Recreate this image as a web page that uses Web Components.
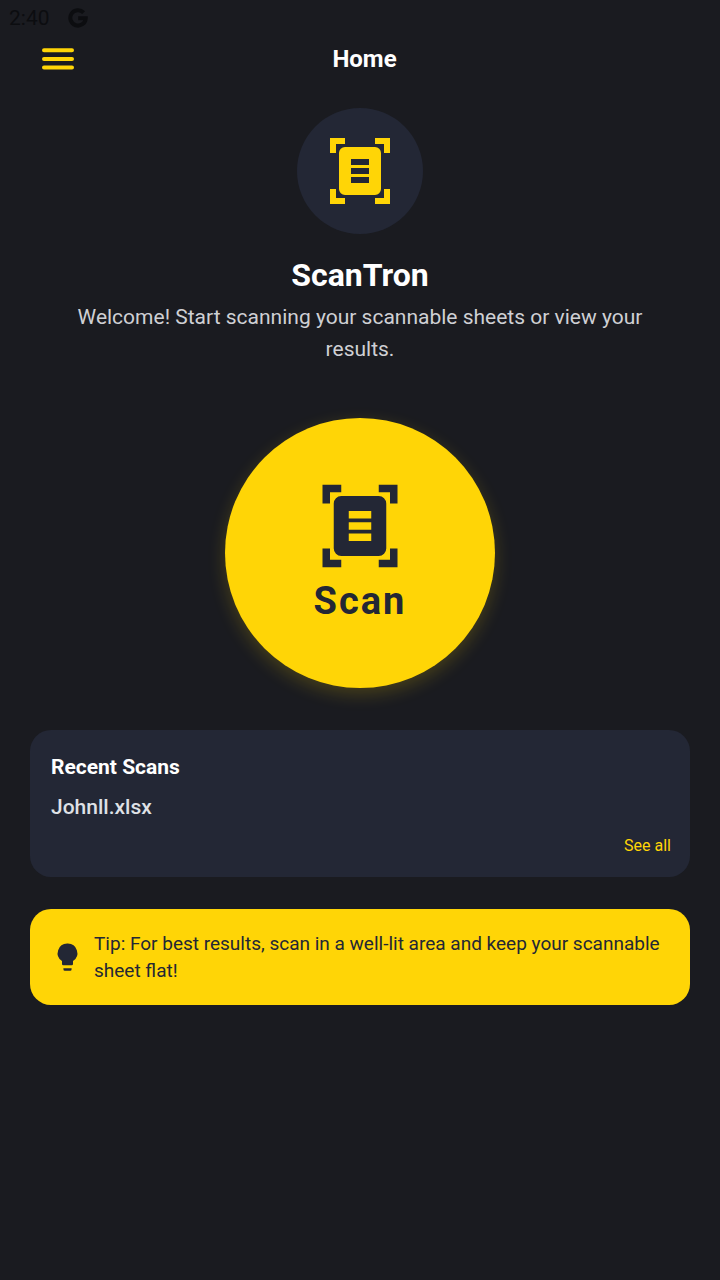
<!DOCTYPE html>
<html lang="en">
<head>
<meta charset="utf-8">
<meta name="viewport" content="width=device-width, initial-scale=1">
<title>ScanTron</title>
<style>
html { background: #1a1b20; }
body { margin: 0; font-family: Roboto, sans-serif; color: #fff; }
</style>
</head>
<body>
<scan-home></scan-home>
<script>
function define(name, html) {
  const template = document.createElement('template');
  template.innerHTML = '<style>*{box-sizing:border-box}</style>' + html;
  customElements.define(name, class extends HTMLElement {
    constructor() {
      super();
      this.attachShadow({ mode: 'open' }).append(template.content.cloneNode(true));
    }
  });
}

define('scan-icon', `
<style>
:host { display: block; width: var(--icon-size, 72px); height: var(--icon-size, 72px); }
svg { display: block; width: 100%; height: 100%; }
</style>
<svg viewBox="0 0 24 24" fill="currentColor" aria-hidden="true">
  <path d="M2 1h5v2H4v3H2zM17 1h5v5h-2V3h-3zM2 18h2v3h3v2H2zM20 18h2v5h-5v-2h3z"/>
  <path fill-rule="evenodd" d="M7 4h10a2 2 0 0 1 2 2v12a2 2 0 0 1-2 2H7a2 2 0 0 1-2-2V6a2 2 0 0 1 2-2zM9 8v2h6V8zM9 11v2h6v-2zM9 14v2h6v-2z"/>
</svg>`);

define('status-bar', `
<style>
:host { display: flex; align-items: center; gap: 18px; height: 36px; padding: 0 9px; font-size: 21px; line-height: 36px; color: #0c0d10; }
svg { display: block; width: 20px; height: 20px; }
</style>
<span>2:40</span>
<svg viewBox="0 0 20 20" fill="none" stroke="currentColor" stroke-width="4" aria-hidden="true">
  <path d="M15.6 4.6A7.7 7.7 0 1 0 17.7 10.3H10.2"/>
</svg>`);

define('app-header', `
<style>
:host { display: grid; grid-template-columns: 48px 1fr 48px; align-items: center; height: 46px; padding: 0 25px 0 34px; }
button { display: grid; place-items: center; width: 48px; height: 46px; padding: 0; border: 0; background: none; color: #ffd506; }
svg { display: block; width: 32px; height: 22px; }
h1 { margin: 0; font-size: 24px; line-height: 32px; font-weight: 700; text-align: center; }
</style>
<button type="button" aria-label="Menu">
  <svg viewBox="0 0 32 22" stroke="currentColor" stroke-width="4" stroke-linecap="round" aria-hidden="true"><path d="M2 2.3h28M2 11h28M2 19.6h28"/></svg>
</button>
<h1><slot></slot></h1>`);

define('welcome-hero', `
<style>
:host { display: flex; flex-direction: column; align-items: center; text-align: center; }
.logo { display: grid; place-items: center; width: 126px; height: 126px; border-radius: 50%; background: #232735; color: #ffd506; }
h2 { margin: 20px 0 5px; font-size: 32px; line-height: 42px; font-weight: 700; }
p { margin: 0; padding: 0 30px; font-size: 21px; line-height: 32px; color: #cfd0d4; }
</style>
<div class="logo"><scan-icon></scan-icon></div>
<h2><slot name="title"></slot></h2>
<p><slot></slot></p>`);

define('scan-button', `
<style>
:host { display: flex; justify-content: center; }
button { display: flex; flex-direction: column; align-items: center; justify-content: center; gap: 8px; width: 270px; height: 270px; padding: 0 0 2px; border: 0; border-radius: 50%; background: #ffd506; color: #232735; font: 700 38px/44px Roboto, sans-serif; letter-spacing: 2px; box-shadow: 0 6px 18px rgba(255, 213, 6, .2); --icon-size: 90px; }
</style>
<button type="button"><scan-icon></scan-icon><span><slot></slot></span></button>`);

define('recent-scans', `
<style>
:host { display: flex; flex-direction: column; padding: 21px 19px 19px 21px; border-radius: 21px; background: #232735; }
h3 { margin: 0 0 8px; font-size: 21px; line-height: 32px; font-weight: 700; }
ul { margin: 0 0 11px; padding: 0; list-style: none; font-size: 21px; line-height: 32px; font-weight: 500; color: #dfe1e6; }
a { align-self: flex-end; font-size: 16px; line-height: 24px; color: #ffd506; text-decoration: none; }
</style>
<h3>Recent Scans</h3>
<ul><li><slot></slot></li></ul>
<a href="#scans">See all</a>`);

define('scan-tip', `
<style>
:host { display: flex; align-items: center; gap: 10px; padding: 21px 18px 21px 21px; border-radius: 21px; background: #ffd506; color: #232735; }
svg { flex: none; display: block; width: 33px; height: 33px; }
p { margin: 0; font-size: 19px; line-height: 27px; }
</style>
<svg viewBox="0 0 33 33" fill="currentColor" aria-hidden="true">
  <path d="M16.5 2.5a9.6 9.6 0 0 1 5.5 17.6V23a1.3 1.3 0 0 1-1.3 1.3h-8.4A1.3 1.3 0 0 1 11 23v-2.9a9.6 9.6 0 0 1 5.5-17.6zM12.4 27.2h8.2v1a1.5 1.5 0 0 1-1.5 1.5h-5.2a1.5 1.5 0 0 1-1.5-1.5z"/>
</svg>
<p><slot></slot></p>`);

define('scan-home', `
<style>
:host { display: flex; flex-direction: column; }
main { display: flex; flex-direction: column; padding: 26px 30px 30px; }
scan-button { margin: 53px 0 42px; }
scan-tip { margin-top: 32px; }
</style>
<status-bar></status-bar>
<app-header>Home</app-header>
<main>
  <welcome-hero><span slot="title">ScanTron</span>Welcome! Start scanning your scannable sheets or view your results.</welcome-hero>
  <scan-button>Scan</scan-button>
  <recent-scans>Johnll.xlsx</recent-scans>
  <scan-tip>Tip: For best results, scan in a well-lit area and keep your scannable sheet flat!</scan-tip>
</main>`);
</script>
</body>
</html>
